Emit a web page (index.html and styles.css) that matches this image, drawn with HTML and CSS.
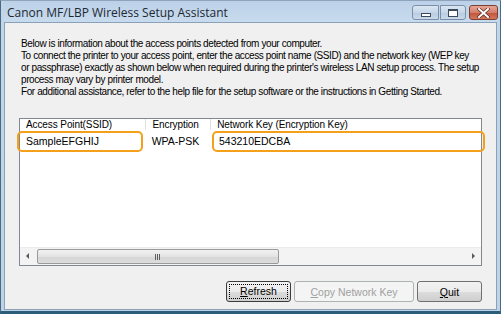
FILE: index.html
```html
<!DOCTYPE html>
<html lang="en">
<head>
  <meta charset="UTF-8">
  <title>Canon MF/LBP Wireless Setup Assistant</title>
  <link rel="stylesheet" href="styles.css">
</head>
<body>
  <div class="window">
    <div class="titlebar">
      <span class="title">Canon MF/LBP Wireless Setup Assistant</span>
      <div class="caption-buttons">
        <div class="cap-btn cap-min"><span class="min-glyph"></span></div>
        <div class="cap-btn cap-max"><span class="max-glyph"></span></div>
        <div class="cap-btn cap-close">
          <svg width="13" height="10" viewBox="0 0 13 10">
            <path d="M2 1 L11 9 M11 1 L2 9" stroke="#5a2a20" stroke-width="3.4" stroke-linecap="square"/>
            <path d="M2 1 L11 9 M11 1 L2 9" stroke="#ffffff" stroke-width="2" stroke-linecap="square"/>
          </svg>
        </div>
      </div>
    </div>

    <div class="client">
      <p class="intro">
        Below is information about the access points detected from your computer.<br>
        To connect the printer to your access point, enter the access point name (SSID) and the network key (WEP key<br>
        or passphrase) exactly as shown below when required during the printer's wireless LAN setup process. The setup<br>
        process may vary by printer model.<br>
        For additional assistance, refer to the help file for the setup software or the instructions in Getting Started.
      </p>

      <div class="listview">
        <div class="lv-header">
          <div class="col col-ssid">Access Point(SSID)</div>
          <div class="col col-enc">Encryption</div>
          <div class="col col-key">Network Key (Encryption Key)</div>
        </div>
        <div class="lv-row">
          <div class="col col-ssid"><span class="mark mark-ssid">SampleEFGHIJ</span></div>
          <div class="col col-enc">WPA-PSK</div>
          <div class="col col-key"><span class="mark mark-key">543210EDCBA</span></div>
        </div>
        <div class="lv-body"></div>
        <div class="hscroll">
          <div class="arrow arrow-left"></div>
          <div class="track">
            <div class="thumb"><span class="grip"></span></div>
          </div>
          <div class="arrow arrow-right"></div>
        </div>
      </div>

      <div class="actions">
        <button class="btn btn-default"><span class="focus"><u>R</u>efresh</span></button>
        <button class="btn btn-wide" disabled><u>C</u>opy Network Key</button>
        <button class="btn"><u>Q</u>uit</button>
      </div>
    </div>
  </div>
</body>
</html>
```

FILE: styles.css
```css
body {
  margin: 0;
  padding: 0;
  width: 501px;
  height: 314px;
  overflow: hidden;
  background-color: #ffffff;
}
.window {
  height: 314px;
  box-sizing: border-box;
  border: 1px solid #4a6a84;
  border-top-color: #8ea4bb;
  border-bottom: 3px solid #2b5d78;
  background: linear-gradient(to bottom, #c2d6ea, #bfd3e8);
  padding: 0 3px 1px 3px;
  display: flex;
  flex-direction: column;
}
.titlebar {
  height: 21px;
  flex-shrink: 0;
  display: flex;
  align-items: center;
  justify-content: space-between;
  background: linear-gradient(to bottom, #bcd1e8, #c8dbee);
}
.title {
  font-family: "Open Sans", "Noto Sans", sans-serif;
  font-size: 12px;
  color: #1e2832;
  padding-left: 3px;
  padding-top: 1px;
}
.caption-buttons {
  display: flex;
  align-self: flex-start;
  margin-top: 4px;
  margin-right: -1px;
}
.cap-btn {
  height: 15px;
  box-sizing: border-box;
  border: 1px solid #7b90a8;
  border-radius: 3px;
  display: flex;
  align-items: center;
  justify-content: center;
  background: linear-gradient(to bottom, #dbe6f2, #c6d6e8 50%, #b8cbe0 51%, #c9d9ea);
}
.cap-min {
  width: 27px;
  border-radius: 3px 0 0 3px;
}
.cap-max {
  width: 26px;
  margin-left: 1px;
  border-radius: 0 3px 3px 0;
}
.cap-close {
  width: 29px;
  margin-left: 3px;
  border-color: #7a4034;
  background: linear-gradient(to bottom, #e8a593, #d47f6b 50%, #c0533a 51%, #d3765c);
}
.min-glyph {
  width: 8px;
  height: 2px;
  border: 1px solid #3c4b5c;
  background-color: #ffffff;
  margin-top: 5px;
}
.max-glyph {
  width: 8px;
  height: 5px;
  border: 1px solid #3c4b5c;
  border-top-width: 2px;
  background-color: #ffffff;
}
.client {
  flex: 1;
  min-height: 0;
  overflow: hidden;
  background-color: #f0f0f0;
  border: 1px solid #8ba1b8;
  padding: 0 14px 0 14px;
  display: flex;
  flex-direction: column;
  font-family: "Liberation Sans", Arial, sans-serif;
  font-size: 10px;
  color: #000000;
}
.intro {
  margin: 15px 0 0 2px;
  line-height: 12px;
  letter-spacing: -0.4px;
  white-space: nowrap;
}
.listview {
  margin-top: 20px;
  height: 146px;
  flex-shrink: 0;
  border: 1px solid #828790;
  background-color: #ffffff;
  display: flex;
  flex-direction: column;
}
.lv-header {
  display: flex;
  height: 12px;
  line-height: 12px;
  color: #000000;
}
.lv-header .col {
  border-right: 1px solid #e0e0e0;
  overflow: hidden;
  white-space: nowrap;
  height: 11px;
  font-size: 10px;
  letter-spacing: -0.1px;
}
.col {
  box-sizing: border-box;
  padding-left: 6px;
}
.col-ssid {
  width: 127px;
}
.col-enc {
  width: 65px;
}
.col-key {
  width: 271px;
}
.lv-header .col-key {
  border-right: none;
}
.lv-row {
  display: flex;
  height: 20px;
  align-items: center;
  font-size: 10.5px;
}
.lv-row .col-key {
  padding-left: 0;
}
.mark {
  display: flex;
  align-items: center;
  box-sizing: border-box;
  height: 21px;
  border: 2px solid #f5a01a;
  border-radius: 5px;
}
.mark-ssid {
  width: 126px;
  margin-left: -9px;
  padding-left: 7px;
}
.mark-key {
  width: 273px;
  margin-left: 2px;
  padding-left: 5px;
}
.lv-body {
  flex: 1;
}
.hscroll {
  height: 17px;
  display: flex;
  align-items: center;
  background-color: #f3f3f3;
  border-top: 1px solid #ececec;
}
.arrow {
  width: 17px;
  height: 17px;
  position: relative;
}
.arrow-left::after,
.arrow-right::after {
  content: "";
  position: absolute;
  top: 5px;
  border-top: 3px solid transparent;
  border-bottom: 3px solid transparent;
}
.arrow-left::after {
  left: 6px;
  border-right: 3px solid #5a5a5a;
}
.arrow-right::after {
  left: 8px;
  border-left: 3px solid #5a5a5a;
}
.track {
  flex: 1;
  height: 17px;
}
.thumb {
  width: 242px;
  height: 15px;
  box-sizing: border-box;
  border: 1px solid #9a9a9a;
  border-radius: 2px;
  background: linear-gradient(to bottom, #f2f2f2, #e3e3e3 50%, #d6d6d6 51%, #dcdcdc);
  display: flex;
  align-items: center;
  justify-content: center;
  margin-top: 1px;
}
.grip {
  width: 6px;
  height: 6px;
  background: repeating-linear-gradient(to right, #5f5f5f 0 1px, transparent 1px 2px);
}
.actions {
  display: flex;
  justify-content: flex-end;
  gap: 3px;
  margin-top: 15px;
}
.btn {
  height: 21px;
  width: 65px;
  box-sizing: border-box;
  font-family: "Liberation Sans", Arial, sans-serif;
  font-size: 10.5px;
  color: #000000;
  background: linear-gradient(to bottom, #f2f2f2, #ebebeb 50%, #dddddd 51%, #cfcfcf);
  border: 1px solid #707070;
  border-radius: 3px;
  padding: 0;
}
.btn-wide {
  width: 120px;
}
.btn:disabled {
  color: #a0a0a0;
  border-color: #adb2b5;
  background: #f4f4f4;
}
.btn-default {
  border-color: #3c3c3c;
  padding: 2px;
}
.focus {
  display: block;
  height: 100%;
  box-sizing: border-box;
  border: 1px dotted #000000;
  line-height: 13px;
}
```
